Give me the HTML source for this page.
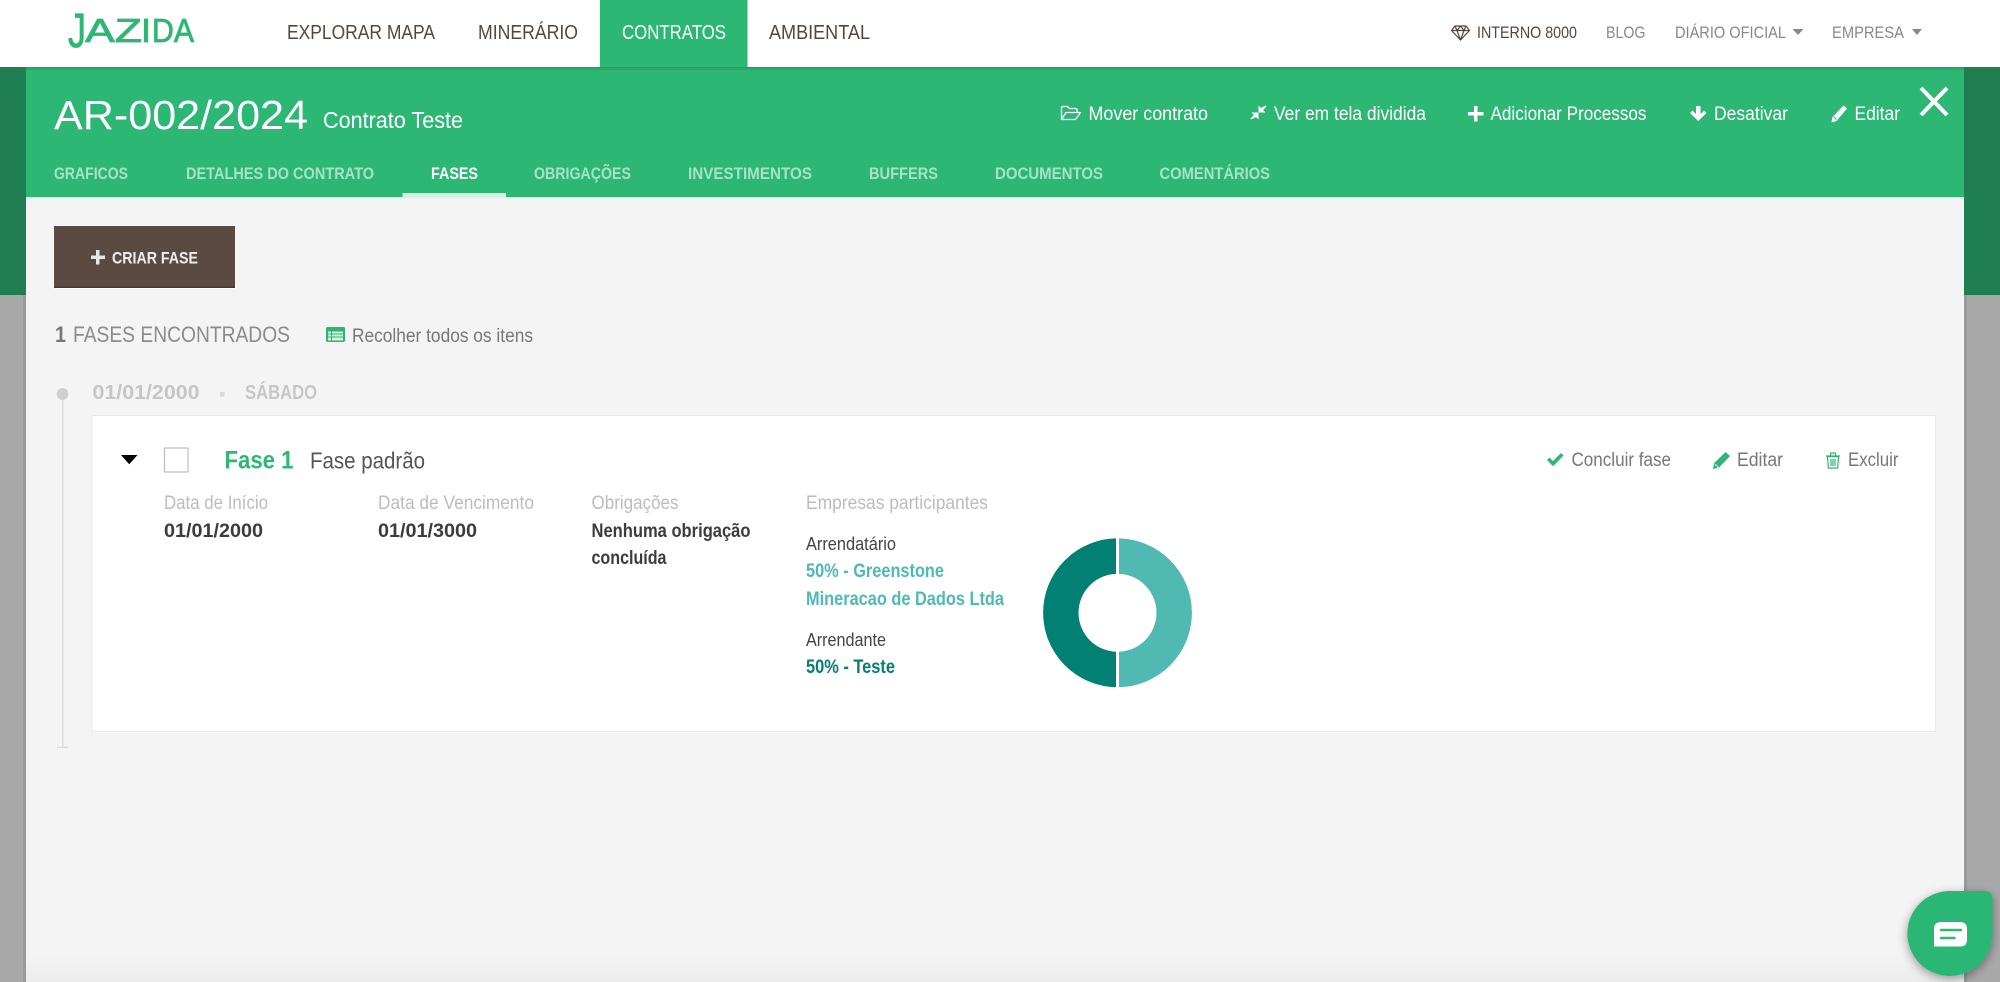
<!DOCTYPE html>
<html lang="pt-BR">
<head>
<meta charset="utf-8">
<title>AR-002/2024 - Fases</title>
<style>
html,body{margin:0;padding:0;width:2000px;height:982px;overflow:hidden;background:#a9a9a9}
svg{display:block;position:absolute;left:0;top:0}
text{font-family:"Liberation Sans",sans-serif;white-space:pre}
.b{font-weight:700}
</style>
</head>
<body>
<svg xmlns="http://www.w3.org/2000/svg" width="2000" height="982" viewBox="0 0 2000 982">
<defs>
<linearGradient id="bottomfade" x1="0" y1="0" x2="0" y2="1"><stop offset="0" stop-color="#f4f4f4"/><stop offset="1" stop-color="#ececec"/></linearGradient>
<linearGradient id="topshade" x1="0" y1="0" x2="0" y2="1"><stop offset="0" stop-color="#000" stop-opacity=".16"/><stop offset="1" stop-color="#000" stop-opacity="0"/></linearGradient>
<filter id="sh" x="-30%" y="-30%" width="160%" height="160%"><feDropShadow dx="0" dy="3" stdDeviation="5" flood-color="#000" flood-opacity=".38"/></filter>
<clipPath id="cl"><rect x="1030" y="530" width="86" height="170"/></clipPath>
<clipPath id="cr"><rect x="1119" y="530" width="86" height="170"/></clipPath>
</defs>

<!-- backdrop -->
<rect width="2000" height="982" fill="#a9a9a9"/>
<rect x="0" y="67" width="2000" height="228" fill="#1f7f53"/>
<rect x="23" y="295" width="3" height="687" fill="#9a9a9a"/>
<rect x="1964" y="295" width="3" height="687" fill="#999"/>

<!-- panel -->
<rect x="26" y="67" width="1938" height="915" fill="#f4f4f4"/>
<rect x="26" y="955" width="1938" height="27" fill="url(#bottomfade)"/>
<rect x="26" y="67" width="1938" height="130" fill="#2cb774"/>
<rect x="26" y="197" width="1938" height="1.500" fill="#d9f3e6"/>
<rect x="26" y="67" width="1938" height="4" fill="url(#topshade)"/>

<!-- header -->
<rect width="2000" height="67" fill="#fff"/>
<rect x="600" y="0" width="147.500" height="67" fill="#2cb774"/>

<!-- logo -->
<g fill="#2cb774" stroke="#2cb774" stroke-width=".8">
<text x="68" y="47" font-size="48" textLength="18" lengthAdjust="spacingAndGlyphs">J</text>
<text x="85" y="42" font-size="33" textLength="57" lengthAdjust="spacingAndGlyphs">AZ</text>
<text x="141" y="42" font-size="33" textLength="10" lengthAdjust="spacingAndGlyphs">I</text>
<text x="152" y="42" font-size="33" textLength="42" lengthAdjust="spacingAndGlyphs">DA</text>
</g>

<!-- main nav -->
<g font-size="20" fill="#56463e">
<text x="287" y="39" textLength="148" lengthAdjust="spacingAndGlyphs">EXPLORAR MAPA</text>
<text x="478" y="39" textLength="100" lengthAdjust="spacingAndGlyphs">MINERÁRIO</text>
<text x="622" y="39" textLength="104" lengthAdjust="spacingAndGlyphs" fill="#fff">CONTRATOS</text>
<text x="769" y="39" textLength="101" lengthAdjust="spacingAndGlyphs">AMBIENTAL</text>
</g>

<!-- right nav -->
<g fill="none" stroke="#56463e" stroke-width="1.200" stroke-linejoin="round">
<path d="M1455 26h11l3.500 4.500L1460.500 40 1451.500 30.500z"/>
<path d="M1451.500 30.500h18M1457 30.500l3.500 9.500 3.500-9.500M1455 26l2 4.500 3.500-4.500 3.500 4.500 2-4.500"/>
</g>
<g font-size="17">
<text x="1477" y="38" textLength="100" lengthAdjust="spacingAndGlyphs" fill="#56463e">INTERNO 8000</text>
<text x="1606" y="38" textLength="39.500" lengthAdjust="spacingAndGlyphs" fill="#888">BLOG</text>
<text x="1675" y="38" textLength="111" lengthAdjust="spacingAndGlyphs" fill="#888">DIÁRIO OFICIAL</text>
<text x="1832" y="38" textLength="72" lengthAdjust="spacingAndGlyphs" fill="#888">EMPRESA</text>
</g>
<path d="M1792.500 29h11l-5.500 6z M1912 29h10l-5 6z" fill="#888"/>

<!-- title -->
<text x="54" y="129" font-size="41" fill="#fff" textLength="254" lengthAdjust="spacingAndGlyphs">AR-002/2024</text>
<text x="323" y="128" font-size="23" fill="#fff" textLength="140" lengthAdjust="spacingAndGlyphs">Contrato Teste</text>

<!-- actions -->
<g font-size="19" fill="#fff">
<text x="1088.500" y="120" textLength="119.500" lengthAdjust="spacingAndGlyphs">Mover contrato</text>
<text x="1274" y="120" textLength="152" lengthAdjust="spacingAndGlyphs">Ver em tela dividida</text>
<text x="1490.500" y="120" textLength="156" lengthAdjust="spacingAndGlyphs">Adicionar Processos</text>
<text x="1714" y="120" textLength="74" lengthAdjust="spacingAndGlyphs">Desativar</text>
<text x="1854.500" y="120" textLength="45.500" lengthAdjust="spacingAndGlyphs">Editar</text>
</g>
<!-- folder -->
<path d="M1061.500 119.500V108q0-1.500 1.500-1.500h4.500l2 2h6q1.500 0 1.500 1.500v2M1061.500 119.500h14l5-7h-14.500z" fill="none" stroke="#fff" stroke-width="1.300" stroke-linejoin="round"/>
<!-- compress -->
<path d="M1265.500 105.500l1 1-3.500 3.500 2.500 2.500h-7v-7l2.500 2.500zM1251 119.500l-0.500-1 3.500-3.500-2.500-2.500h7v7l-2.500-2.500z" fill="#fff"/>
<!-- plus -->
<path d="M1474 106h3.500v6h6v3.500h-6v6H1474v-6h-6V112h6z" fill="#fff"/>
<!-- arrow down -->
<path d="M1696 106h4.500v8l3.500-3.500 2.500 2.500-8.300 8-8.200-8 2.500-2.500 3.500 3.500z" fill="#fff"/>
<!-- pencil -->
<path d="M1843.500 105.500l3.500 3-10.500 12.500-5 1.500 .8-5.200z" fill="#fff"/>
<path d="M1833.500 116.500l3 3" stroke="#2cb774" stroke-width=".9" fill="none"/>
<!-- close -->
<path d="M1921 88l26 27M1947 88l-26 27" stroke="#fff" stroke-width="4" fill="none"/>

<!-- tabs -->
<g font-size="17" class="b" fill="#a9e1c5">
<text x="54" y="179" textLength="74" lengthAdjust="spacingAndGlyphs">GRAFICOS</text>
<text x="186" y="179" textLength="188" lengthAdjust="spacingAndGlyphs">DETALHES DO CONTRATO</text>
<text x="431" y="179" textLength="47" lengthAdjust="spacingAndGlyphs" fill="#fff">FASES</text>
<text x="534" y="179" textLength="97" lengthAdjust="spacingAndGlyphs">OBRIGAÇÕES</text>
<text x="688" y="179" textLength="124" lengthAdjust="spacingAndGlyphs">INVESTIMENTOS</text>
<text x="869" y="179" textLength="69" lengthAdjust="spacingAndGlyphs">BUFFERS</text>
<text x="995" y="179" textLength="108" lengthAdjust="spacingAndGlyphs">DOCUMENTOS</text>
<text x="1159.500" y="179" textLength="110.500" lengthAdjust="spacingAndGlyphs">COMENTÁRIOS</text>
</g>
<rect x="402.500" y="193" width="103.500" height="4" fill="#d5f1e3"/>

<!-- create button -->
<rect x="53.500" y="225.500" width="182" height="63" fill="#fff"/>
<rect x="54" y="226" width="181" height="62" fill="#5a4a42"/>
<rect x="54" y="286.500" width="181" height="1.500" fill="#463830"/>
<path d="M96 250h3.500v5.500h5.500v3.500h-5.500v5.500H96V259h-5v-3.500h5z" fill="#e8e6e4"/>
<text x="112" y="263.500" font-size="16.500" class="b" fill="#f1efee" textLength="86" lengthAdjust="spacingAndGlyphs">CRIAR FASE</text>

<!-- counter -->
<text x="55" y="342" font-size="22" class="b" fill="#777" textLength="11" lengthAdjust="spacingAndGlyphs">1</text>
<text x="73" y="342" font-size="22.500" fill="#8b8b8b" textLength="217" lengthAdjust="spacingAndGlyphs">FASES ENCONTRADOS</text>
<rect x="326" y="327" width="19" height="15" rx="1.500" fill="#2cb774"/>
<rect x="328" y="331.500" width="15" height="9" fill="#d6f1e4"/>
<path d="M328 334h15M328 337h15M331.500 331.500v9" stroke="#2cb774" stroke-width="1" fill="none"/>
<text x="352" y="342" font-size="19" fill="#777" textLength="181" lengthAdjust="spacingAndGlyphs">Recolher todos os itens</text>

<!-- timeline -->
<rect x="62" y="394" width="1.500" height="353" fill="#dcdcdc"/>
<rect x="57" y="746.500" width="11" height="1.500" fill="#dcdcdc"/>
<ellipse cx="62.500" cy="394" rx="5.800" ry="6" fill="#cfcfcf"/>
<text x="92.500" y="399" font-size="20" class="b" fill="#c6c6c6" textLength="107" lengthAdjust="spacingAndGlyphs">01/01/2000</text>
<rect x="220" y="392" width="4.500" height="4.500" fill="#d8d8d8"/>
<text x="245" y="399" font-size="20" class="b" fill="#c6c6c6" textLength="72" lengthAdjust="spacingAndGlyphs">SÁBADO</text>

<!-- card -->
<rect x="92" y="415.500" width="1843.500" height="316" fill="#fff" stroke="#e9e9e9" stroke-width="1"/>
<path d="M121 455h16.500l-8.250 9.300z" fill="#000"/>
<rect x="164.500" y="448" width="23.500" height="24" fill="#fff" stroke="#bdbdbd" stroke-width="1.200"/>
<text x="224.500" y="468.500" font-size="25" class="b" fill="#2cb774" textLength="69" lengthAdjust="spacingAndGlyphs">Fase 1</text>
<text x="310" y="468.500" font-size="23.500" fill="#555" textLength="115" lengthAdjust="spacingAndGlyphs">Fase padrão</text>

<!-- card actions -->
<path d="M1547 460l2.500-2.500 3.500 3.500 8-8 2.500 2.500-10.500 10.800z" fill="#2cb774"/>
<text x="1571.500" y="466" font-size="19" fill="#777" textLength="99.500" lengthAdjust="spacingAndGlyphs">Concluir fase</text>
<path d="M1725.500 452l4.500 4-11 11.500-6 1.500 1.200-6z" fill="#2cb774"/>
<path d="M1715 464l3.500 3.500" stroke="#fff" stroke-width="1"/>
<text x="1737" y="466" font-size="19" fill="#777" textLength="46" lengthAdjust="spacingAndGlyphs">Editar</text>
<path d="M1827.500 456.500h11l-.8 11.500h-9.400zM1826 456h14M1830.500 456v-3h5v3M1831 459v7M1833 459v7M1835 459v7" fill="none" stroke="#2cb774" stroke-width="1.200"/>
<text x="1848" y="466" font-size="19" fill="#777" textLength="50.500" lengthAdjust="spacingAndGlyphs">Excluir</text>

<!-- details -->
<g font-size="19" fill="#bcbcbc">
<text x="164" y="509" textLength="104" lengthAdjust="spacingAndGlyphs">Data de Início</text>
<text x="378" y="509" textLength="156" lengthAdjust="spacingAndGlyphs">Data de Vencimento</text>
<text x="591.500" y="509" textLength="87" lengthAdjust="spacingAndGlyphs">Obrigações</text>
<text x="806" y="509" textLength="182" lengthAdjust="spacingAndGlyphs">Empresas participantes</text>
</g>
<g font-size="19" class="b" fill="#3c3c3c">
<text x="164" y="537" textLength="99" lengthAdjust="spacingAndGlyphs">01/01/2000</text>
<text x="378" y="537" textLength="99" lengthAdjust="spacingAndGlyphs">01/01/3000</text>
<text x="591.500" y="537" textLength="159" lengthAdjust="spacingAndGlyphs">Nenhuma obrigação</text>
<text x="591.500" y="564" textLength="75" lengthAdjust="spacingAndGlyphs">concluída</text>
</g>
<g font-size="18" fill="#444">
<text x="806" y="550" textLength="90" lengthAdjust="spacingAndGlyphs">Arrendatário</text>
<text x="806" y="646" textLength="80" lengthAdjust="spacingAndGlyphs">Arrendante</text>
</g>
<g font-size="19" class="b">
<text x="806" y="577" fill="#4fb9b2" textLength="138" lengthAdjust="spacingAndGlyphs">50% - Greenstone</text>
<text x="806" y="605" fill="#4fb9b2" textLength="198" lengthAdjust="spacingAndGlyphs">Mineracao de Dados Ltda</text>
<text x="806" y="673" fill="#028074" textLength="89" lengthAdjust="spacingAndGlyphs">50% - Teste</text>
</g>

<!-- donut -->
<circle cx="1117.500" cy="612.800" r="56.700" fill="none" stroke="#028074" stroke-width="35.400" clip-path="url(#cl)"/>
<circle cx="1117.500" cy="612.800" r="56.700" fill="none" stroke="#4fb9b2" stroke-width="35.400" clip-path="url(#cr)"/>

<!-- chat bubble -->
<path d="M1951 891H1984q8.500 0 8.500 8.500V933.500A42.500 42.500 0 0 1 1950 976 42.700 42.700 0 0 1 1907.300 933.500 42.700 42.500 0 0 1 1951 891Z" fill="#2cb774" filter="url(#sh)"/>
<path d="M1941 922h19q7 0 7 7v10.500q0 7-7 7h-26v-17.500q0-7 7-7z" fill="#fff"/>
<path d="M1941 930h20M1941 938h13.500" stroke="#2cb774" stroke-width="2.400" stroke-linecap="round" fill="none"/>
</svg>
</body>
</html>
